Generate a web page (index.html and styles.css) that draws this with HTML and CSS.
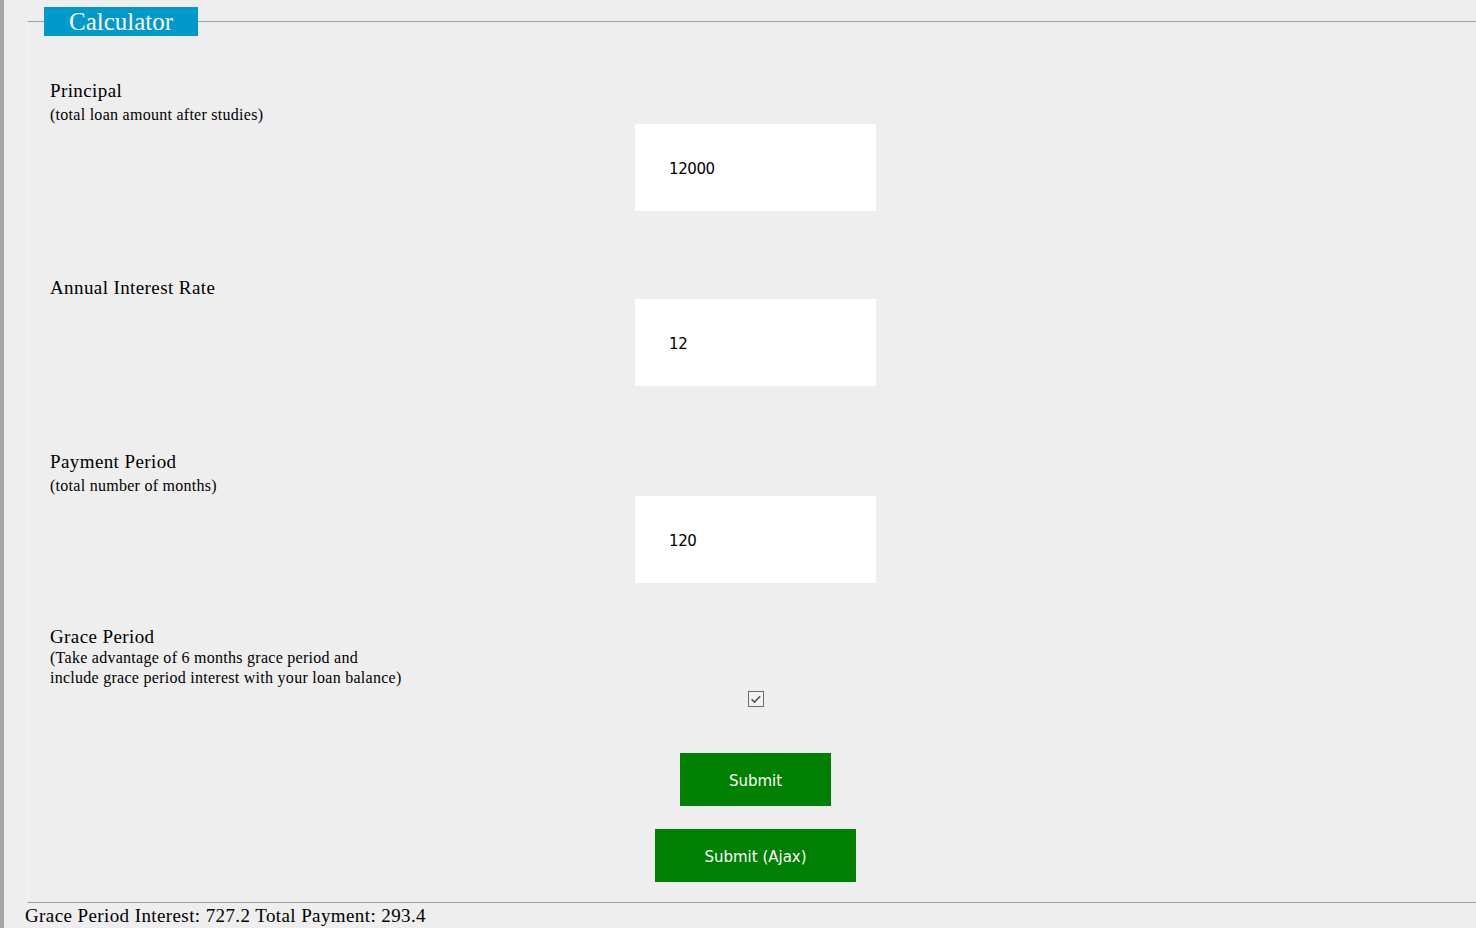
FILE: index.html
```html
<!DOCTYPE html>
<html lang="en">
<head>
<meta charset="utf-8">
<title>Calculator</title>
<link rel="stylesheet" href="styles.css">
</head>
<body>
  <form class="calc-form">
    <fieldset class="calc">
      <legend class="calc-title">Calculator</legend>

      <div class="row">
        <div class="label">Principal</div>
        <div class="hint hint--snug">(total loan amount after studies)</div>
        <div class="field"><input class="input" type="text" value="12000"></div>
      </div>

      <div class="row row--after-first">
        <div class="label">Annual Interest Rate</div>
        <div class="field"><input class="input" type="text" value="12"></div>
      </div>

      <div class="row row--spaced">
        <div class="label">Payment Period</div>
        <div class="hint">(total number of months)</div>
        <div class="field"><input class="input" type="text" value="120"></div>
      </div>

      <div class="row row--grace">
        <div class="label">Grace Period</div>
        <div class="hint hint--tight">(Take advantage of 6 months grace period and<br>include grace period interest with your loan balance)</div>
        <div class="field field--check">
          <span class="checkbox" role="checkbox" aria-checked="true">
            <svg width="16" height="16" viewBox="0 0 16 16">
              <rect x="0.5" y="0.5" width="15" height="15" fill="#f2f2f2" stroke="#6a6a6a" stroke-width="1"/>
              <path d="M3.6 8.2 L6.4 11 L12.2 5.2" fill="none" stroke="#505050" stroke-width="1.6"/>
            </svg>
          </span>
        </div>
      </div>

      <div class="actions">
        <button class="btn" type="button">Submit</button>
        <button class="btn" type="button">Submit (Ajax)</button>
      </div>
    </fieldset>
  </form>
  <div class="result">Grace Period Interest: 727.2 Total Payment: 293.4</div>
</body>
</html>
```
FILE: styles.css
```css
html, body {
  margin: 0;
  padding: 0;
}

body {
  box-sizing: border-box;
  min-height: 100vh;
  background: #eeeeee;
  border-left: 4px solid #a6a6a6;
  padding-left: 21px;
  font-family: "Liberation Serif", "Times New Roman", serif;
  color: #000;
  overflow: hidden;
}

.calc-form {
  margin: 0;
}

.calc {
  margin: 7px 0 0 2px;
  padding: 44px 0 20px 16px;
  border-top: 1px solid #a0a0a0;
  border-bottom: 1px solid #a0a0a0;
  border-left: 1px solid #f6f6f6;
  border-right: none;
  min-width: 0;
}

.calc-title {
  margin: 0;
  padding: 0 25px;
  background: #0099cc;
  color: #ffffff;
  font-size: 25px;
  line-height: 29px;
}

.row {
  display: flex;
  flex-direction: column;
  padding-left: 6px;
}

.row--after-first {
  margin-top: 66px;
}

.row--spaced {
  margin-top: 65px;
}

.row--grace {
  margin-top: 43px;
}

.label {
  font-size: 19px;
  line-height: 22px;
  letter-spacing: 0.4px;
}

.hint {
  font-size: 16px;
  line-height: 20px;
  margin-top: 3px;
  letter-spacing: 0.27px;
}

.hint--snug {
  margin-bottom: -1px;
}

.hint--tight {
  margin-top: 0;
}

.field {
  margin-left: 585px;
  width: 241px;
  display: flex;
  justify-content: center;
}

.field--check {
  margin-top: 3px;
}

.input {
  box-sizing: border-box;
  width: 241px;
  height: 87px;
  border: none;
  outline: none;
  background: #ffffff;
  padding: 2px 0 0 34px;
  margin: 0;
  font-family: "DejaVu Sans", Verdana, sans-serif;
  font-size: 15px;
  letter-spacing: -0.4px;
  color: #000;
}

.checkbox {
  display: block;
  width: 16px;
  height: 16px;
}

.checkbox svg {
  display: block;
}

.actions {
  margin: 46px 0 0 591px;
  width: 241px;
  display: flex;
  flex-direction: column;
  align-items: center;
  gap: 23px;
}

.btn {
  height: 53px;
  padding: 2px 49px 0;
  margin: 0;
  border: none;
  background: #008000;
  color: #ffffff;
  font-family: "DejaVu Sans", Verdana, sans-serif;
  font-size: 15px;
  cursor: pointer;
}

.result {
  font-size: 19px;
  line-height: 22px;
  letter-spacing: 0.4px;
  margin-top: 2px;
}
```
